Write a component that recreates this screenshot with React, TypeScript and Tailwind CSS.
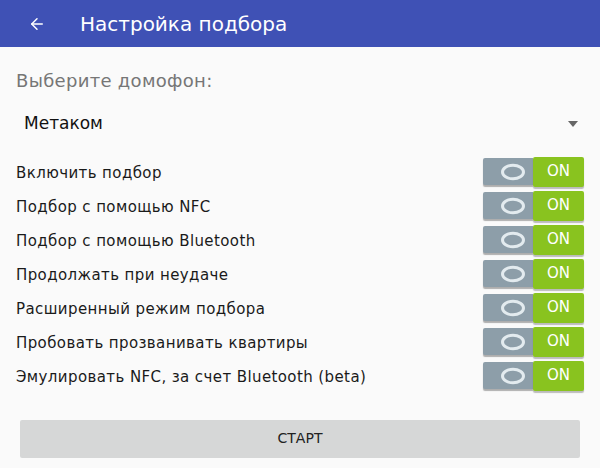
import { ArrowLeft } from "lucide-react";

const options = [
  "Включить подбор",
  "Подбор с помощью NFC",
  "Подбор с помощью Bluetooth",
  "Продолжать при неудаче",
  "Расширенный режим подбора",
  "Пробовать прозванивать квартиры",
  "Эмулировать NFC, за счет Bluetooth (beta)",
];

function Toggle() {
  return (
    <div className="flex items-center">
      <div className="flex h-[27px] w-[50px] items-center justify-center rounded-l-[2px] bg-[#8d9ea9] pl-[10px] shadow-[0_2px_1px_rgba(0,0,0,0.3)]">
        <svg width="26" height="18" viewBox="0 0 26 18">
          <ellipse cx="13" cy="9" rx="10.5" ry="6.8" fill="none" stroke="#e3ebef" strokeWidth="3" />
        </svg>
      </div>
      <div className="flex h-[30px] w-[51px] items-center justify-center rounded-[2px] bg-[#89c31f] text-[15px] text-white shadow-[0_2px_1px_rgba(0,0,0,0.25)]">
        ON
      </div>
    </div>
  );
}

export default function App() {
  return (
    <div className="flex h-[468px] w-[600px] flex-col bg-[#fafafa] font-['DejaVu_Sans',sans-serif]">
      <div className="flex h-[47px] items-center bg-[#3f51b5] text-white">
        <ArrowLeft className="ml-[28px] h-[18px] w-[18px]" strokeWidth={2} />
        <span className="ml-[34px] text-[20px]">Настройка подбора</span>
      </div>

      <div className="px-4 pt-[20px] text-[18px] tracking-[0.3px] text-[#767676]">Выберите домофон:</div>

      <div className="flex items-center justify-between pl-[24px] pr-[22px] pt-[17px]">
        <span className="text-[17px] text-[#111]">Метаком</span>
        <svg width="10" height="6" viewBox="0 0 10 6">
          <path d="M0 0 L10 0 L5 6 Z" fill="#666" />
        </svg>
      </div>

      <div className="mt-[20px] flex flex-col gap-[4px] pl-4 pr-[16px]">
        {options.map((label) => (
          <div key={label} className="flex h-[30px] items-center justify-between">
            <span className="pt-[4px] text-[15px] tracking-[0.4px] text-[#1a1a1a]">{label}</span>
            <Toggle />
          </div>
        ))}
      </div>

      <div className="mt-[29px] px-[20px]">
        <button className="flex h-[38px] w-full items-center justify-center rounded-[2px] bg-[#d6d7d7] text-[14px] text-[#222]">
          СТАРТ
        </button>
      </div>
    </div>
  );
}
